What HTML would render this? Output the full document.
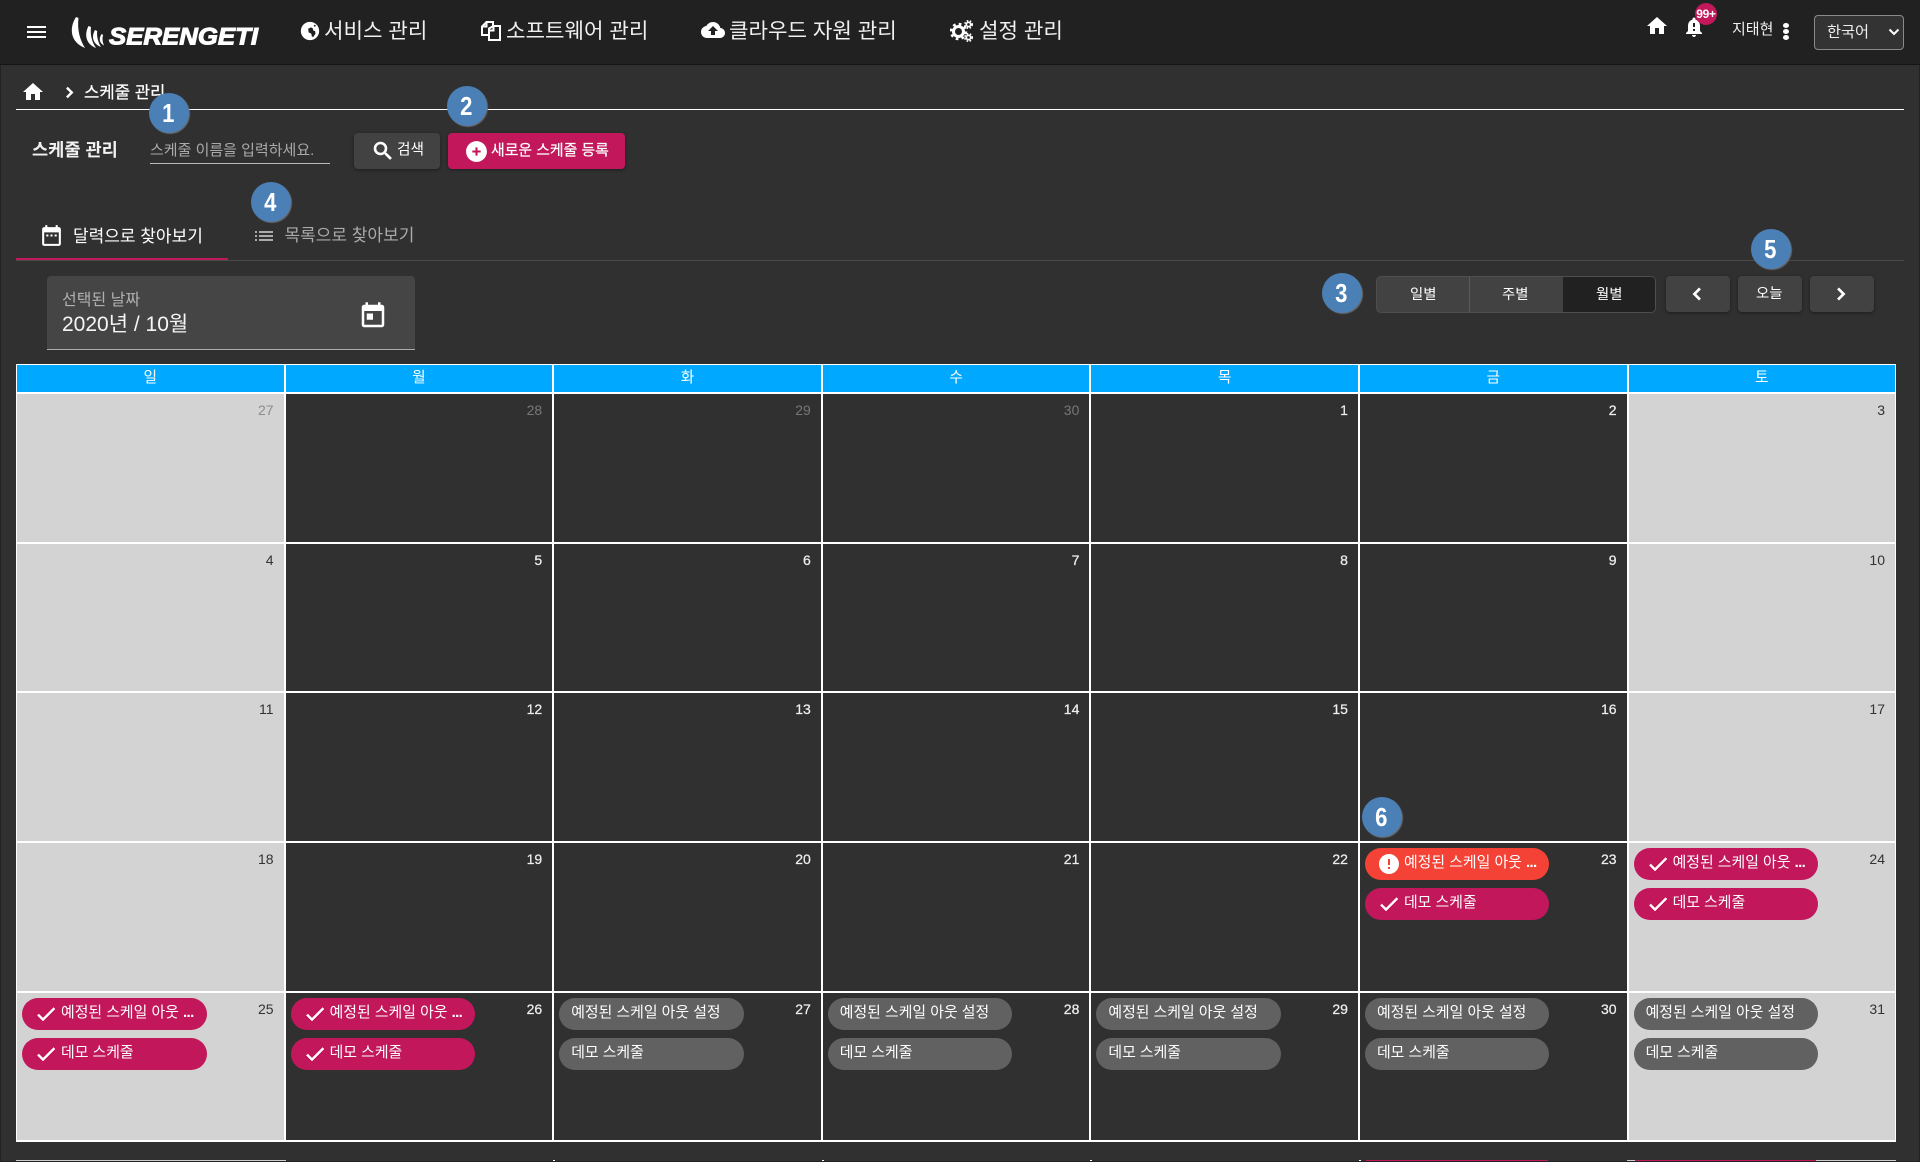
<!DOCTYPE html>
<html lang="ko"><head><meta charset="utf-8"><title>스케줄 관리</title>
<style>
*{box-sizing:border-box}
html,body{margin:0;padding:0}
body{width:1920px;height:1162px;overflow:hidden;background:#303030;position:relative;color:#fff;font-family:"Liberation Sans","Noto Sans CJK KR",sans-serif}
.a{position:absolute}
.t{position:absolute;white-space:nowrap}
svg{position:absolute;fill:#fff;display:block}
#hd{left:0;top:0;width:1920px;height:65px;background:#212121;border-bottom:1px solid #151515}
.nav{font-size:21.2px;line-height:24px;top:20px;color:#f0f0f0}
.btn{position:absolute;background:#424242;border-radius:4px;box-shadow:0 1px 3px rgba(0,0,0,.4)}
.bd{position:absolute;width:40px;height:40px;border-radius:50%;background:#4b80b7;box-shadow:1px 1px 1px #6b6b6b;text-align:center;font:bold 26px/40px "Liberation Sans",sans-serif;color:#fff;z-index:5;padding-right:2px}
.bd span{display:inline-block;transform:scaleX(.85)}
#g{position:absolute;left:16px;top:364px;width:1880px;height:777.5px;background:#fff;padding:1px;display:grid;grid-template-columns:repeat(6,266.6px) 1fr;grid-template-rows:27px repeat(5,147.7px);gap:2px}
.h{background:#00a9ff;text-align:center;font-size:14.7px;line-height:27px;color:#fff}
.c{background:#303030;position:relative}
.w{background:#d3d3d3}
.n{position:absolute;right:10px;top:8px;font-size:14px;line-height:16px;color:#eee;-webkit-text-stroke:.25px #eee}
.w .n{color:#333;-webkit-text-stroke:0}
.o .n{color:#777;-webkit-text-stroke:0}
.w.o .n{color:#8c8c8c}
.p{position:absolute;left:5px;width:184.5px;height:32px;border-radius:16px;background:#616161;font-size:14.9px;line-height:31px;white-space:nowrap;padding-left:12px;color:#fff}
.p1{top:5px}.p2{top:45px}
.k{background:#c2185b;padding-left:39px}
.r{background:#f44336;padding-left:39px}
.p svg{left:12px;top:4px;width:24px;height:24px}
.k svg{stroke:#fff;stroke-width:.5}
.d{letter-spacing:-.6px;font-weight:bold}
</style></head><body>
<div class="a" id="hd"></div>
<div class="a" style="left:0;top:65px;width:1px;height:1097px;background:#222"></div>
<div class="a" style="left:1919px;top:65px;width:1px;height:1097px;background:#222"></div>

<div class="a" style="left:27px;top:26px;width:19px;height:2px;background:#fff"></div>
<div class="a" style="left:27px;top:31px;width:19px;height:2px;background:#fff"></div>
<div class="a" style="left:27px;top:36px;width:19px;height:2px;background:#fff"></div>

<svg style="left:60px;top:10px" width="210" height="50" viewBox="60 10 210 50">
<path d="M76 17C69 28 70 42 85 48C80 40 77 30 78.500 18Z"/>
<path d="M88.500 26C84 35 86 44 96 48C92 42 90 35 91 27Z"/>
<path d="M95 30C91 37 93 44 101 47C98 42 96.500 36 97.200 31Z"/>
<path d="M101.500 34C98.500 39 99.500 43 104 45.500C102.500 42 102 38 103.200 35Z"/>
<text x="109" y="44.500" textLength="149" lengthAdjust="spacingAndGlyphs" style="font:italic bold 24px 'Liberation Sans',sans-serif;stroke:#fff;stroke-width:1">SERENGETI</text>
</svg>

<svg style="left:299px;top:20px" width="22" height="22" viewBox="0 0 24 24"><circle cx="12" cy="12" r="10"/><path fill="#212121" d="M10 9.500l3-1.500 2 1 .5 2.500 2 .5.500 3-2.500 3.500-1.500-.5-.5-3-3-1.500zM17 5l1.500 1-1 1.500-1.500-1z"/></svg>
<span class="t nav" style="left:324px">서비스 관리</span>

<svg style="left:480px;top:20px;fill:none;stroke:#fff;stroke-width:2" width="22" height="21" viewBox="0 0 22 21"><path d="M8 15H2V6.500L6.500 2H13V7"/><path d="M6.500 2V6.500H2"/><path d="M9 8.500L13.500 6H20V20H9Z" /><path d="M13.500 6V10.500H9"/></svg>
<span class="t nav" style="left:506px">소프트웨어 관리</span>

<svg style="left:701px;top:18px" width="24" height="24" viewBox="0 0 24 24"><path d="M19.350 10.040C18.670 6.590 15.640 4 12 4 9.110 4 6.600 5.640 5.350 8.040 2.340 8.360 0 10.910 0 14c0 3.310 2.690 6 6 6h13c2.760 0 5-2.240 5-5 0-2.640-2.050-4.780-4.650-4.960zM14 13v4h-4v-4H7l5-5 5 5h-3z"/></svg>
<span class="t nav" style="left:729px">클라우드 자원 관리</span>

<svg style="left:950px;top:19.500px;fill:none;stroke:#fff" width="24" height="22" viewBox="0 0 24 22">
<circle cx="8.500" cy="11.500" r="5" stroke-width="3"/><circle cx="8.500" cy="11.500" r="7.500" stroke-width="2.500" stroke-dasharray="2.700 3.190"/>
<circle cx="18.500" cy="4.500" r="2.200" stroke-width="1.700"/><circle cx="18.500" cy="4.500" r="3.700" stroke-width="1.600" stroke-dasharray="1.600 1.500"/>
<circle cx="18.500" cy="17.500" r="2.200" stroke-width="1.700"/><circle cx="18.500" cy="17.500" r="3.700" stroke-width="1.600" stroke-dasharray="1.600 1.500"/></svg>
<span class="t nav" style="left:979px">설정 관리</span>

<svg style="left:1645px;top:14px" width="24" height="24" viewBox="0 0 24 24"><path d="M10 20v-6h4v6h5v-8h3L12 3 2 12h3v8z"/></svg>
<svg style="left:1682px;top:15px" width="24" height="24" viewBox="0 0 24 24"><path d="M18 16v-5c0-3.070-1.640-5.640-4.500-6.320V4c0-.830-.670-1.500-1.500-1.500s-1.500.670-1.500 1.500v.680C7.630 5.360 6 7.920 6 11v5l-2 2v1h16v-1l-2-2zm-5 0h-2v-2h2v2zm0-4h-2V8h2v4zm-1 10c1.100 0 2-.900 2-2h-4c0 1.100.900 2 2 2z"/></svg>
<div class="a" style="left:1695px;top:3px;width:22px;height:22px;border-radius:50%;background:#c2185b;text-align:center;font:bold 12px/23px 'Liberation Sans',sans-serif;white-space:nowrap;letter-spacing:-.3px">99+</div>
<span class="t" style="left:1732px;top:19px;font-size:15px;line-height:22px;color:#eee">지태현</span>
<div class="a" style="left:1783px;top:23px;width:6px;height:5px;border-radius:50%;background:#fff"></div>
<div class="a" style="left:1783px;top:29px;width:6px;height:5px;border-radius:50%;background:#fff"></div>
<div class="a" style="left:1783px;top:35px;width:6px;height:5px;border-radius:50%;background:#fff"></div>
<div class="a" style="left:1814px;top:15px;width:90px;height:35px;border:1px solid #8a8a8a;border-radius:4px;background:#333"></div>
<span class="t" style="left:1827px;top:21px;font-size:15.200px;line-height:24px;color:#eee">한국어</span>
<svg style="left:1886px;top:26px;fill:none;stroke:#fff;stroke-width:2" width="16" height="12" viewBox="0 0 16 12"><path d="M3.500 3.500L8 8l4.500-4.500"/></svg>

<svg style="left:21px;top:80px" width="24" height="24" viewBox="0 0 24 24"><path d="M10 20v-6h4v6h5v-8h3L12 3 2 12h3v8z"/></svg>
<svg style="left:58.500px;top:81.500px;stroke:#fff;stroke-width:.8" width="21" height="21" viewBox="0 0 24 24"><path d="M10 6L8.590 7.410 13.170 12l-4.580 4.590L10 18l6-6z"/></svg>
<span class="t" style="left:84px;top:82px;font-size:16.700px;line-height:22px;-webkit-text-stroke:.2px #fff">스케줄 관리</span>
<div class="a" style="left:16px;top:109px;width:1888px;height:1px;background:#fff"></div>

<span class="t" style="left:32px;top:138.500px;font-size:17.600px;line-height:22px;font-weight:bold;color:#f2f2f2">스케줄 관리</span>
<span class="t" style="left:150px;top:140px;font-size:15px;line-height:22px;color:#aaa">스케줄 이름을 입력하세요.</span>
<div class="a" style="left:150px;top:163px;width:180px;height:1px;background:#bbb"></div>

<div class="btn" style="left:354px;top:133px;width:86px;height:36px"></div>
<svg style="left:370.500px;top:139px;stroke:#fff;stroke-width:.6" width="24" height="24" viewBox="0 0 24 24"><path d="M15.500 14h-.790l-.280-.270C15.410 12.590 16 11.110 16 9.500 16 5.910 13.090 3 9.500 3S3 5.910 3 9.500 5.910 16 9.500 16c1.610 0 3.090-.590 4.230-1.570l.270.280v.790l5 4.990L20.490 19l-4.990-5zm-6 0C7.010 14 5 11.990 5 9.500S7.010 5 9.500 5 14 7.010 14 9.500 11.990 14 9.500 14z"/></svg>
<span class="t" style="left:397px;top:139px;font-size:14.700px;line-height:22px">검색</span>

<div class="btn" style="left:448px;top:133px;width:177px;height:36px;background:#c2185b"></div>
<svg style="left:464px;top:139px" width="25" height="25" viewBox="0 0 24 24"><path d="M12 2C6.480 2 2 6.480 2 12s4.480 10 10 10 10-4.480 10-10S17.520 2 12 2zm4 11h-3v3h-2v-3H8v-2h3V8h2v3h3v2z"/></svg>
<span class="t" style="left:491px;top:139.500px;font-size:14.900px;line-height:22px;-webkit-text-stroke:.2px #fff">새로운 스케줄 등록</span>

<div class="a" style="left:16px;top:260px;width:1888px;height:1px;background:#4a4a4a"></div>
<div class="a" style="left:16px;top:258px;width:212px;height:2px;background:#c2185b"></div>
<svg style="left:38.500px;top:222.500px" width="25" height="25" viewBox="0 0 24 24"><path d="M9 11H7v2h2v-2zm4 0h-2v2h2v-2zm4 0h-2v2h2v-2zm2-7h-1V2h-2v2H8V2H6v2H5c-1.110 0-1.990.900-1.990 2L3 20c0 1.100.890 2 2 2h14c1.100 0 2-.900 2-2V6c0-1.100-.900-2-2-2zm0 16H5V9h14v11z"/></svg>
<span class="t" style="left:73px;top:225px;font-size:17px;line-height:24px">달력으로 찾아보기</span>
<svg style="left:251.500px;top:223.500px;fill:#aaa" width="24" height="24" viewBox="0 0 24 24"><path d="M3 13h2v-2H3v2zm0 4h2v-2H3v2zm0-8h2V7H3v2zm4 4h14v-2H7v2zm0 4h14v-2H7v2zM7 7v2h14V7H7z"/></svg>
<span class="t" style="left:284.500px;top:224px;font-size:17px;line-height:24px;color:#aaa">목록으로 찾아보기</span>

<div class="a" style="left:47px;top:276px;width:368px;height:74px;background:#454545;border-radius:4px 4px 0 0;border-bottom:1px solid #aaa"></div>
<span class="t" style="left:62px;top:290px;font-size:16px;line-height:22px;color:#b0b0b0">선택된 날짜</span>
<span class="t" style="left:62px;top:313px;font-size:21px;line-height:24px;color:#f5f5f5">2020년 / 10월</span>
<svg style="left:358px;top:300.500px" width="30" height="30" viewBox="0 0 24 24"><path d="M19 3h-1V1h-2v2H8V1H6v2H5c-1.110 0-1.990.900-1.990 2L3 19c0 1.100.890 2 2 2h14c1.100 0 2-.900 2-2V5c0-1.100-.900-2-2-2zm0 16H5V8h14v11zM7 10h5v5H7z"/></svg>

<div class="a" style="left:1376px;top:276px;width:280px;height:37px;background:#424242;border:1px solid #4e4e4e;border-radius:5px;overflow:hidden">
<div class="a" style="left:92px;top:0;width:1px;height:37px;background:#5a5a5a"></div>
<div class="a" style="left:186px;top:0;width:94px;height:37px;background:#212121"></div>
</div>
<span class="t" style="left:1410px;top:284px;font-size:14.400px;line-height:22px">일별</span>
<span class="t" style="left:1502px;top:284px;font-size:14.400px;line-height:22px">주별</span>
<span class="t" style="left:1596px;top:284px;font-size:14.400px;line-height:22px">월별</span>
<div class="btn" style="left:1666px;top:276px;width:64px;height:36px"></div>
<div class="btn" style="left:1738px;top:276px;width:64px;height:36px"></div>
<div class="btn" style="left:1810px;top:276px;width:64px;height:36px"></div>
<svg style="left:1685px;top:282px;stroke:#fff;stroke-width:.7" width="24" height="24" viewBox="0 0 24 24"><path d="M15.410 7.410L14 6l-6 6 6 6 1.410-1.410L10.830 12z"/></svg>
<span class="t" style="left:1756px;top:282.500px;font-size:14.400px;line-height:22px">오늘</span>
<svg style="left:1829px;top:282px;stroke:#fff;stroke-width:.7" width="24" height="24" viewBox="0 0 24 24"><path d="M10 6L8.590 7.410 13.170 12l-4.580 4.590L10 18l6-6z"/></svg>

<div id="g">
<div class="h">일</div><div class="h">월</div><div class="h">화</div><div class="h">수</div><div class="h">목</div><div class="h">금</div><div class="h">토</div>

<div class="c w o"><span class="n">27</span></div>
<div class="c o"><span class="n">28</span></div>
<div class="c o"><span class="n">29</span></div>
<div class="c o"><span class="n">30</span></div>
<div class="c"><span class="n">1</span></div>
<div class="c"><span class="n">2</span></div>
<div class="c w"><span class="n">3</span></div>

<div class="c w"><span class="n">4</span></div>
<div class="c"><span class="n">5</span></div>
<div class="c"><span class="n">6</span></div>
<div class="c"><span class="n">7</span></div>
<div class="c"><span class="n">8</span></div>
<div class="c"><span class="n">9</span></div>
<div class="c w"><span class="n">10</span></div>

<div class="c w"><span class="n">11</span></div>
<div class="c"><span class="n">12</span></div>
<div class="c"><span class="n">13</span></div>
<div class="c"><span class="n">14</span></div>
<div class="c"><span class="n">15</span></div>
<div class="c"><span class="n">16</span></div>
<div class="c w"><span class="n">17</span></div>

<div class="c w"><span class="n">18</span></div>
<div class="c"><span class="n">19</span></div>
<div class="c"><span class="n">20</span></div>
<div class="c"><span class="n">21</span></div>
<div class="c"><span class="n">22</span></div>
<div class="c"><span class="n">23</span>
<div class="p p1 r"><svg viewBox="0 0 24 24"><path d="M12 2C6.480 2 2 6.480 2 12s4.480 10 10 10 10-4.480 10-10S17.520 2 12 2zm1 15h-2v-2h2v2zm0-4h-2V7h2v6z"/></svg>예정된 스케일 아웃 <span class="d">...</span></div>
<div class="p p2 k"><svg viewBox="0 0 24 24"><path d="M9 16.170L4.830 12l-1.420 1.410L9 19 21 7l-1.410-1.410z"/></svg>데모 스케줄</div></div>
<div class="c w"><span class="n">24</span>
<div class="p p1 k"><svg viewBox="0 0 24 24"><path d="M9 16.170L4.830 12l-1.420 1.410L9 19 21 7l-1.410-1.410z"/></svg>예정된 스케일 아웃 <span class="d">...</span></div>
<div class="p p2 k"><svg viewBox="0 0 24 24"><path d="M9 16.170L4.830 12l-1.420 1.410L9 19 21 7l-1.410-1.410z"/></svg>데모 스케줄</div></div>

<div class="c w"><span class="n">25</span>
<div class="p p1 k"><svg viewBox="0 0 24 24"><path d="M9 16.170L4.830 12l-1.420 1.410L9 19 21 7l-1.410-1.410z"/></svg>예정된 스케일 아웃 <span class="d">...</span></div>
<div class="p p2 k"><svg viewBox="0 0 24 24"><path d="M9 16.170L4.830 12l-1.420 1.410L9 19 21 7l-1.410-1.410z"/></svg>데모 스케줄</div></div>
<div class="c"><span class="n">26</span>
<div class="p p1 k"><svg viewBox="0 0 24 24"><path d="M9 16.170L4.830 12l-1.420 1.410L9 19 21 7l-1.410-1.410z"/></svg>예정된 스케일 아웃 <span class="d">...</span></div>
<div class="p p2 k"><svg viewBox="0 0 24 24"><path d="M9 16.170L4.830 12l-1.420 1.410L9 19 21 7l-1.410-1.410z"/></svg>데모 스케줄</div></div>
<div class="c"><span class="n">27</span><div class="p p1">예정된 스케일 아웃 설정</div><div class="p p2">데모 스케줄</div></div>
<div class="c"><span class="n">28</span><div class="p p1">예정된 스케일 아웃 설정</div><div class="p p2">데모 스케줄</div></div>
<div class="c"><span class="n">29</span><div class="p p1">예정된 스케일 아웃 설정</div><div class="p p2">데모 스케줄</div></div>
<div class="c"><span class="n">30</span><div class="p p1">예정된 스케일 아웃 설정</div><div class="p p2">데모 스케줄</div></div>
<div class="c w"><span class="n">31</span><div class="p p1">예정된 스케일 아웃 설정</div><div class="p p2">데모 스케줄</div></div>
</div>

<div class="a" style="left:16px;top:1160px;width:270px;height:1px;background:#ccc"></div>
<div class="a" style="left:553px;top:1160px;width:2px;height:1px;background:#fff"></div>
<div class="a" style="left:822px;top:1160px;width:2px;height:1px;background:#fff"></div>
<div class="a" style="left:1090px;top:1160px;width:2px;height:1px;background:#fff"></div>
<div class="a" style="left:1359px;top:1160px;width:2px;height:1px;background:#fff"></div>
<div class="a" style="left:1366px;top:1160px;width:182px;height:1px;background:#c2185b"></div>
<div class="a" style="left:1627px;top:1160px;width:269px;height:1px;background:#ccc"></div>
<div class="a" style="left:1635px;top:1160px;width:181px;height:1px;background:#c2185b"></div>
<div class="a" style="left:0;top:1161px;width:1920px;height:1px;background:#222"></div>

<div class="bd" style="left:149px;top:93px"><span>1</span></div>
<div class="bd" style="left:447px;top:86px"><span>2</span></div>
<div class="bd" style="left:1322px;top:273px"><span>3</span></div>
<div class="bd" style="left:251px;top:182px"><span>4</span></div>
<div class="bd" style="left:1751px;top:229px"><span>5</span></div>
<div class="bd" style="left:1362px;top:797px"><span>6</span></div>
</body></html>
